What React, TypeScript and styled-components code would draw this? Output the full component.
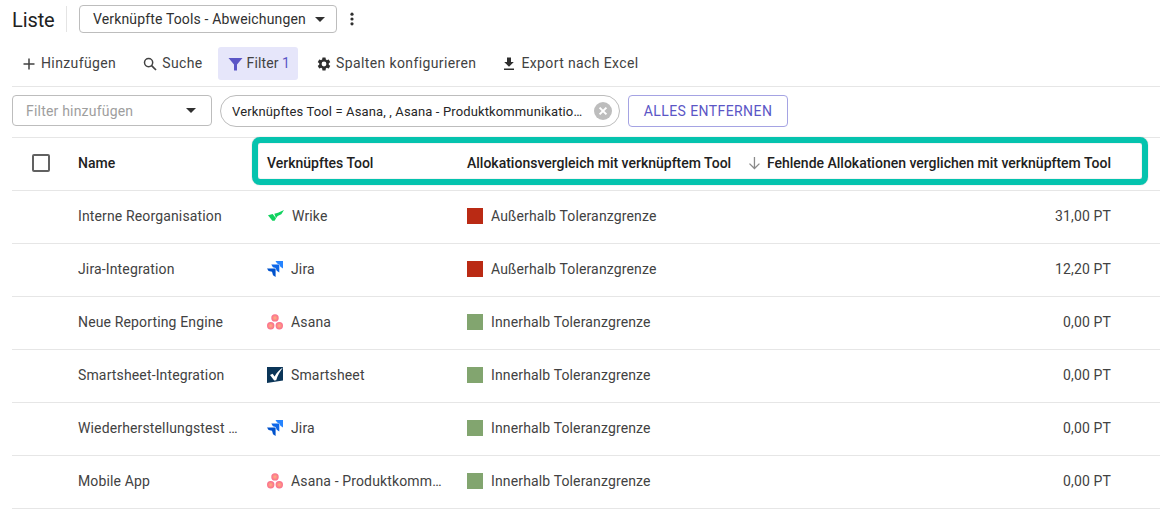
import React from "react";
import styled, { createGlobalStyle } from "styled-components";

const Global = createGlobalStyle`
  html, body { margin: 0; padding: 0; background: #fff; }
  body { font-family: Roboto, "Liberation Sans", sans-serif; color: #212121; overflow: hidden; }
`;
const Page = styled.div`
  position: relative;
  width: 1160px;
  height: 527px;
  padding-left: 12px;
  box-sizing: border-box;
  overflow: hidden;
`;
const TitleBar = styled.div`
  display: flex;
  align-items: center;
  height: 38px;
`;
const Title = styled.h1`
  margin: 0 12px 0 0;
  font-size: 20px;
  font-weight: 400;
  letter-spacing: -0.1px;
  color: #212121;
  width: 54px;
  height: 26px;
  line-height: 28px;
  border-right: 1px solid #e4e4e4;
`;
const ViewSelect = styled.div`
  display: flex;
  align-items: center;
  box-sizing: border-box;
  width: 258px;
  height: 28px;
  border: 1px solid #bdbdbd;
  border-radius: 4px;
  padding-left: 13px;
  font-size: 14px;
  letter-spacing: 0.15px;
  color: #303030;
`;
const Caret = styled.span<{ $left: number }>`
  width: 0;
  height: 0;
  margin-left: ${(p) => p.$left}px;
  border-left: 5px solid transparent;
  border-right: 5px solid transparent;
  border-top: 5px solid #303030;
`;
const Kebab = styled.div`
  margin-left: 8px;
  display: flex;
  width: 14px;
  justify-content: center;
`;
const Toolbar = styled.div`
  display: flex;
  align-items: flex-start;
  height: 39px;
  padding-top: 9px;
  border-bottom: 1px solid #e6e6e6;
  gap: 8px;
`;
const ToolButton = styled.div<{ $active?: boolean; $right: number }>`
  display: flex;
  align-items: center;
  height: 33px;
  padding: 0 ${(p) => p.$right}px 0 10px;
  gap: 4px;
  border-radius: 3px;
  font-size: 14px;
  letter-spacing: ${(p) => (p.$active ? 0.1 : 0.38)}px;
  color: #424242;
  background: ${(p) => (p.$active ? "#e6e6fa" : "transparent")};
  svg { flex-shrink: 0; }
`;
const ButtonLabel = styled.span`
  display: block;
  margin-top: -2px;
`;
const Count = styled.span`
  color: #5b56c6;
`;
const FilterRow = styled.div`
  display: flex;
  align-items: flex-start;
  gap: 8px;
  height: 42px;
  padding-top: 8px;
  border-bottom: 1px solid #e6e6e6;
`;
const FilterInput = styled.div`
  display: flex;
  align-items: center;
  justify-content: space-between;
  box-sizing: border-box;
  width: 200px;
  height: 31px;
  border: 1px solid #bdbdbd;
  border-radius: 4px;
  padding: 0 15px 0 13px;
  font-size: 14px;
  letter-spacing: 0.2px;
  color: #9e9e9e;
`;
const Chip = styled.div`
  display: flex;
  align-items: center;
  box-sizing: border-box;
  width: 400px;
  height: 32px;
  border: 1px solid #bdbdbd;
  border-radius: 16px;
  padding: 0 7px 0 11px;
  font-size: 13px;
  letter-spacing: 0.13px;
  color: #262626;
  svg { flex-shrink: 0; }
`;
const ChipText = styled.span`
  flex: 1;
  white-space: nowrap;
  overflow: hidden;
  text-overflow: ellipsis;
  margin-right: 9px;
`;
const RemoveAll = styled.div`
  display: flex;
  align-items: center;
  justify-content: center;
  box-sizing: border-box;
  width: 160px;
  height: 32px;
  border: 1px solid #a5a3e3;
  border-radius: 4px;
  font-size: 14px;
  letter-spacing: 0.42px;
  color: #5b56c6;
`;
const Row = styled.div`
  display: grid;
  grid-template-columns: 66px 189px 200px 280px 364px;
  align-items: center;
  width: 1148px;
  height: 50px;
  padding-bottom: 2px;
  border-bottom: 1px solid #e6e6e6;
  font-size: 14px;
  letter-spacing: 0.14px;
  color: #424242;
`;
const HeadCell = styled.div`
  font-weight: 500;
  font-size: 14px;
  letter-spacing: 0;
  color: #212121;
  white-space: nowrap;
`;
const SortCell = styled(HeadCell)`
  display: flex;
  align-items: center;
  gap: 5px;
`;
const CheckBox = styled.div`
  box-sizing: border-box;
  width: 18px;
  height: 18px;
  margin-left: 20px;
  border: 2px solid #616161;
  border-radius: 2px;
`;
const Name = styled.div`
  width: 160px;
  white-space: nowrap;
  overflow: hidden;
  text-overflow: ellipsis;
`;
const Tool = styled.div`
  display: flex;
  align-items: center;
  gap: 8px;
  width: 176px;
  svg { flex-shrink: 0; }
`;
const ToolName = styled.span`
  white-space: nowrap;
  overflow: hidden;
  text-overflow: ellipsis;
`;
const Status = styled.div`
  display: flex;
  align-items: center;
  gap: 8px;
`;
const Swatch = styled.span<{ $color: string }>`
  width: 16px;
  height: 16px;
  background: ${(p) => p.$color};
`;
const Value = styled.div`
  text-align: right;
`;
const Highlight = styled.div`
  position: absolute;
  left: 252px;
  top: 137px;
  width: 896px;
  height: 48px;
  box-sizing: border-box;
  border: 6px solid #05c3ae;
  border-radius: 8px;
  box-shadow: 0 0 1px 0 rgba(60, 60, 60, 0.55), inset 0 0 1px 0 rgba(60, 60, 60, 0.55);
  pointer-events: none;
`;

const Wrike = () => (
  <svg width="17" height="16" viewBox="-3 0 51 48">
    <path d="M0 22 L14 18 L24 31 L20 38 L13 38 Z" fill="#10d25e" />
    <path d="M19 17 L30 14 L48 6 L40 19 L29 24 L24 31 Z" fill="#10d25e" />
  </svg>
);
const jiraPiece = (x: number, y: number, s: number) =>
  `M${x} ${y} H${x + s} V${y + s} L${x + s - 2.6} ${y + s - 1.8} L${x + s - 3.6} ${y + 3.4} L${x + 1.6} ${y + 2.6} Z`;
const Jira = () => (
  <svg width="16" height="16" viewBox="0 0 16 16">
    <path d={jiraPiece(8.5, 0, 7.5)} fill="#2684ff" />
    <path d={jiraPiece(4.3, 3.6, 8)} fill="#0d66e8" />
    <path d={jiraPiece(0, 7.4, 8.6)} fill="#0052cc" />
  </svg>
);
const Asana = () => (
  <svg width="16" height="16" viewBox="0 0 16 16">
    <defs>
      <radialGradient id="asanaG" cx="50%" cy="50%" r="60%">
        <stop offset="0" stopColor="#ffb080" />
        <stop offset="1" stopColor="#f95d8f" />
      </radialGradient>
    </defs>
    <circle cx="8" cy="3.9" r="3.7" fill="url(#asanaG)" />
    <circle cx="3.7" cy="11.8" r="3.7" fill="url(#asanaG)" />
    <circle cx="12.3" cy="11.8" r="3.7" fill="url(#asanaG)" />
  </svg>
);
const Smartsheet = () => (
  <svg width="16" height="16" viewBox="0 0 16 16">
    <path d="M0 0 H16 V13.4 L0 16 Z" fill="#0b3558" />
    <path d="M3 8 L5.6 6.8 L7.6 9.4 C9.6 6 12.4 2.8 16 0.6 C13 4.4 10.6 8.6 9.2 13.2 L7.2 13.4 Z" fill="#fff" />
  </svg>
);

const tools = { Wrike, Jira, Asana, Smartsheet };
type ToolKey = keyof typeof tools;
const RED = "#ba2a14";
const GREEN = "#82a56f";
const rows: { name: string; icon: ToolKey; tool: string; ok: boolean; value: string }[] = [
  { name: "Interne Reorganisation", icon: "Wrike", tool: "Wrike", ok: false, value: "31,00 PT" },
  { name: "Jira-Integration", icon: "Jira", tool: "Jira", ok: false, value: "12,20 PT" },
  { name: "Neue Reporting Engine", icon: "Asana", tool: "Asana", ok: true, value: "0,00 PT" },
  { name: "Smartsheet-Integration", icon: "Smartsheet", tool: "Smartsheet", ok: true, value: "0,00 PT" },
  { name: "Wiederherstellungstest des Systems", icon: "Jira", tool: "Jira", ok: true, value: "0,00 PT" },
  { name: "Mobile App", icon: "Asana", tool: "Asana - Produktkommunikation", ok: true, value: "0,00 PT" },
];

export default function App() {
  return (
    <Page>
      <Global />
      <TitleBar>
        <Title>Liste</Title>
        <ViewSelect>
          Verknüpfte Tools - Abweichungen
          <Caret $left={9} />
        </ViewSelect>
        <Kebab>
          <svg width="4" height="14" viewBox="0 0 4 14">
            <circle cx="2" cy="2.2" r="1.6" fill="#303030" />
            <circle cx="2" cy="7" r="1.6" fill="#303030" />
            <circle cx="2" cy="11.8" r="1.6" fill="#303030" />
          </svg>
        </Kebab>
      </TitleBar>
      <Toolbar>
        <ToolButton $right={8}>
          <svg width="15" height="14" viewBox="0 0 15 14">
            <path d="M1.5 7 H12.5 M7 1.5 V12.5" stroke="#424242" strokeWidth="1.5" />
          </svg>
          <ButtonLabel>Hinzufügen</ButtonLabel>
        </ToolButton>
        <ToolButton $right={7}>
          <svg width="16" height="16" viewBox="0 0 16 16" fill="none">
            <circle cx="6.6" cy="6.6" r="4.1" stroke="#424242" strokeWidth="1.5" />
            <path d="M9.6 9.6 L14 14" stroke="#424242" strokeWidth="1.7" />
          </svg>
          <ButtonLabel>Suche</ButtonLabel>
        </ToolButton>
        <ToolButton $active $right={8}>
          <svg width="15" height="14" viewBox="0 0 15 14">
            <path d="M0.5 1 H14.5 L9 7.6 V13.5 H6 V7.6 Z" fill="#5b56c6" />
          </svg>
          <ButtonLabel>
            Filter <Count>1</Count>
          </ButtonLabel>
        </ToolButton>
        <ToolButton $right={7}>
          <svg width="16" height="16" viewBox="0 0 24 24">
            <path
              fill="#2e2e2e"
              d="M19.14 12.94c.04-.3.06-.61.06-.94s-.02-.64-.07-.94l2.03-1.58a.49.49 0 0 0 .12-.61l-1.92-3.32a.49.49 0 0 0-.59-.22l-2.39.96a7.03 7.03 0 0 0-1.62-.94l-.36-2.54a.48.48 0 0 0-.48-.41h-3.84a.48.48 0 0 0-.47.41l-.36 2.54c-.59.24-1.13.57-1.62.94l-2.39-.96a.48.48 0 0 0-.59.22L2.74 8.87a.47.47 0 0 0 .12.61l2.03 1.58c-.05.3-.09.63-.09.94s.02.64.07.94l-2.03 1.58a.49.49 0 0 0-.12.61l1.92 3.32c.12.22.37.29.59.22l2.39-.96c.5.38 1.03.7 1.62.94l.36 2.54c.05.24.24.41.48.41h3.84c.24 0 .44-.17.47-.41l.36-2.54c.59-.24 1.13-.56 1.62-.94l2.39.96c.22.08.47 0 .59-.22l1.92-3.32a.47.47 0 0 0-.12-.61l-2.01-1.58zM12 15.6a3.6 3.6 0 1 1 0-7.2 3.6 3.6 0 0 1 0 7.2z"
            />
          </svg>
          <ButtonLabel>Spalten konfigurieren</ButtonLabel>
        </ToolButton>
        <ToolButton $right={8}>
          <svg width="16" height="16" viewBox="0 0 16 16">
            <path d="M6 1.5 H10 V6 H12.8 L8 10.8 L3.2 6 H6 Z M3 12.6 H13 V14 H3 Z" fill="#2e2e2e" />
          </svg>
          <ButtonLabel>Export nach Excel</ButtonLabel>
        </ToolButton>
      </Toolbar>
      <FilterRow>
        <FilterInput>
          Filter hinzufügen
          <Caret $left={0} />
        </FilterInput>
        <Chip>
          <ChipText>Verknüpftes Tool = Asana, , Asana - Produktkommunikation, Wrike</ChipText>
          <svg width="18" height="18" viewBox="0 0 18 18">
            <circle cx="9" cy="9" r="9" fill="#bdbdbd" />
            <path d="M5.6 5.6 L12.4 12.4 M12.4 5.6 L5.6 12.4" stroke="#fff" strokeWidth="2" />
          </svg>
        </Chip>
        <RemoveAll>ALLES ENTFERNEN</RemoveAll>
      </FilterRow>
      <Row>
        <CheckBox />
        <HeadCell>Name</HeadCell>
        <HeadCell>Verknüpftes Tool</HeadCell>
        <HeadCell>Allokationsvergleich mit verknüpftem Tool</HeadCell>
        <SortCell>
          <svg width="15" height="14" viewBox="0 0 15 14" fill="none">
            <path d="M7.5 1 V12.6 M2.5 7.6 L7.5 12.6 L12.5 7.6" stroke="#8a8a8a" strokeWidth="1.3" />
          </svg>
          Fehlende Allokationen verglichen mit verknüpftem Tool
        </SortCell>
      </Row>
      {rows.map((r) => {
        const Icon = tools[r.icon];
        return (
          <Row key={r.name}>
            <span />
            <Name>{r.name}</Name>
            <Tool>
              <Icon />
              <ToolName>{r.tool}</ToolName>
            </Tool>
            <Status>
              <Swatch $color={r.ok ? GREEN : RED} />
              {r.ok ? "Innerhalb Toleranzgrenze" : "Außerhalb Toleranzgrenze"}
            </Status>
            <Value>{r.value}</Value>
          </Row>
        );
      })}
      <Highlight />
    </Page>
  );
}
